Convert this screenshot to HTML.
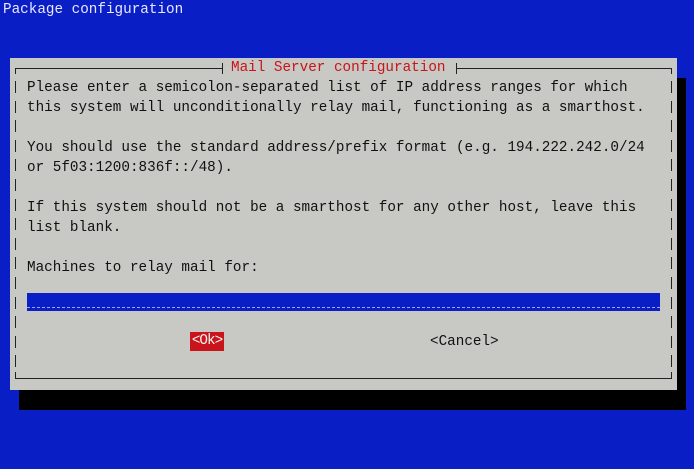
<!DOCTYPE html>
<html><head><style>
body{margin:0;width:694px;height:469px;background:#0a1ec6;position:relative;overflow:hidden;font-family:"Liberation Mono",monospace;font-size:14.3px;}
.a{position:absolute;white-space:pre;line-height:20px;}
#dlg{position:absolute;left:10px;top:58px;width:667px;height:332px;background:#c8c8c4;}
#sh1{position:absolute;left:19px;top:390px;width:667px;height:20px;background:#000;}
#sh2{position:absolute;left:677px;top:78px;width:9px;height:320px;background:#000;}
.t{color:#111;}
.vb{position:absolute;width:1px;background:#222;height:12px;}
</style></head><body>
<div class="a" style="left:3px;top:0px;color:#e8e8ff;">Package configuration</div>
<div id="sh2"></div><div id="sh1"></div>
<div id="dlg"></div>
<!-- top border -->
<div style="position:absolute;left:15px;top:68px;width:208px;height:1px;background:#222"></div>
<div style="position:absolute;left:15px;top:68px;width:1px;height:6px;background:#222"></div>
<div style="position:absolute;left:222px;top:63px;width:1px;height:11px;background:#222"></div>
<div style="position:absolute;left:456px;top:63px;width:1px;height:11px;background:#222"></div>
<div style="position:absolute;left:456px;top:68px;width:216px;height:1px;background:#222"></div>
<div style="position:absolute;left:671px;top:68px;width:1px;height:6px;background:#222"></div>
<div class="a" style="left:231px;top:58px;color:#c8141a;">Mail Server configuration</div>
<!-- bottom border -->
<div style="position:absolute;left:15px;top:378px;width:657px;height:1px;background:#222"></div>
<div style="position:absolute;left:15px;top:372px;width:1px;height:6px;background:#222"></div>
<div style="position:absolute;left:671px;top:372px;width:1px;height:6px;background:#222"></div>
<div id="bars"></div>
<div class="a t" style="left:27px;top:78px;">Please enter a semicolon-separated list of IP address ranges for which
this system will unconditionally relay mail, functioning as a smarthost.

You should use the standard address/prefix format (e.g. 194.222.242.0/24
or 5f03:1200:836f::/48).

If this system should not be a smarthost for any other host, leave this
list blank.

Machines to relay mail for:</div>
<div style="position:absolute;left:27px;top:293px;width:633px;height:18px;background:#0a1ec6;"></div>
<div style="position:absolute;left:27px;top:307px;width:633px;height:0;border-top:1px dashed #9aa8f0;"></div>
<div class="a" style="left:190px;top:332px;width:34px;height:19px;background:#c8141a;color:#f4f4f4;text-align:center;line-height:19px;letter-spacing:-1px;">&lt;Ok&gt;</div>
<div class="a t" style="left:430px;top:332px;">&lt;Cancel&gt;</div>
<script>
var h='';for(var i=0;i<15;i++){var y=81+i*19.6;h+='<div class="vb" style="left:15px;top:'+y+'px"></div><div class="vb" style="left:671px;top:'+y+'px"></div>';}
document.getElementById('bars').innerHTML=h;
</script>
</body></html>
